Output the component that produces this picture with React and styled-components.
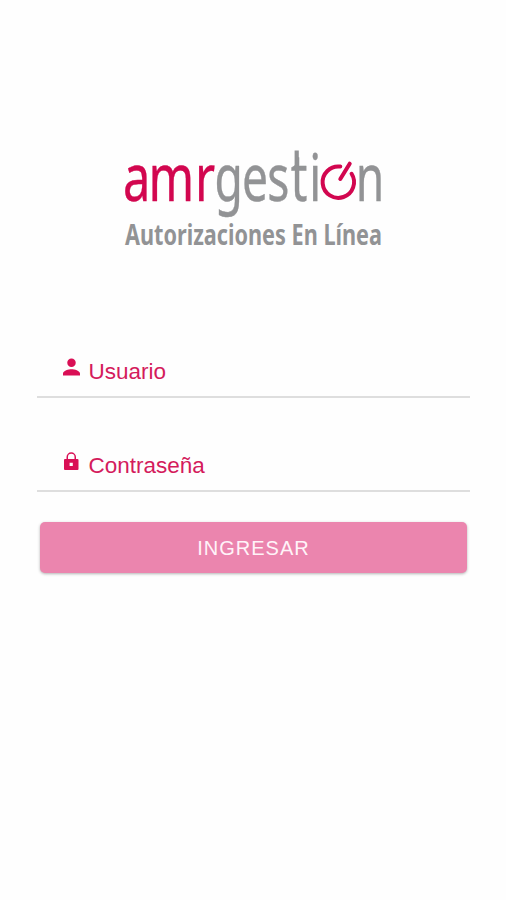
import React from 'react'
import styled, { createGlobalStyle } from 'styled-components'


const App = () =>
  <React.Fragment>
    <GlobalStyle />
    <Screen>
      <Logo />
      <Form>
        <Field>
          <UserIcon />
          <FieldLabel>Usuario</FieldLabel>
        </Field>
        <Field>
          <LockIcon />
          <FieldLabel>Contraseña</FieldLabel>
        </Field>
        <SubmitButton type="button">INGRESAR</SubmitButton>
      </Form>
    </Screen>
  </React.Fragment>

export default App

// the wordmark is set condensed, with one x position for each letter
const Brand = ({ letters, xs, accent, condensed = 0.7 }) =>
  <BrandText
    transform={`scale(${condensed} 1)`}
    x={xs.map(x => x / condensed).join(' ')}
    y="55.7"
    $accent={accent}
  >
    {letters}
  </BrandText>

const Logo = () =>
  <LogoSvg viewBox="0 0 270 104">
    <Brand letters="amr" xs={[2.9, 28.6, 75]} condensed={0.74} accent />
    <Brand letters="gesti" xs={[94.6, 122, 147.3, 170.7, 189.2]} />
    <Stem d="M176.700 5.500 V24" />
    <Power d="M220.300 21.600 A15.700 15.700 0 1 0 231.600 28.800" />
    <Power d="M220.300 34 L229.700 18.700" />
    <Brand letters="n" xs={[235.8]} />
    <Tagline x="5" y="99.5" textLength="257" lengthAdjust="spacingAndGlyphs">
      Autorizaciones En Línea
    </Tagline>
  </LogoSvg>

const UserIcon = () =>
  <Icon viewBox="4 4 16 16">
    <path d="M12 12c2.21 0 4-1.79 4-4s-1.79-4-4-4-4 1.79-4 4 1.79 4 4 4zm0 2c-2.67 0-8 1.34-8 4v2h16v-2c0-2.66-5.33-4-8-4z" />
  </Icon>

const LockIcon = () =>
  <Icon viewBox="0 0 17 18">
    <path
      fillRule="evenodd"
      d="M3.500 7V5a4.500 4.500 0 0 1 9.500 0v2h1.500q1 0 1 1v9q0 1-1 1h-12.500q-1 0-1-1V8q0-1 1-1zM5 7h6.500V5a3.250 3.250 0 0 0-6.500 0zM6.600 10.800v3.200h3.200v-3.200z"
    />
  </Icon>


const GlobalStyle = createGlobalStyle`
  body {
    margin: 0;
    background: #fefefe;
    font-family: "Liberation Sans", Arial, sans-serif;
  }
`
const Screen = styled.main`
  display: flex;
  flex-direction: column;
  box-sizing: border-box;
  height: 900px;
  padding: 145px 36px 0 37px;
`
const LogoSvg = styled.svg`
  display: block;
  flex: none;
  width: 270px;
  height: 104px;
  margin-left: 83px;
  overflow: visible;
`
const BrandText = styled.text`
  fill: ${props => props.$accent ? '#d2064f' : '#929395'};
  stroke: ${props => props.$accent ? '#d2064f' : '#929395'};
  stroke-width: 0.4;
  font-family: "Noto Sans", sans-serif;
  font-size: 66px;
`
const Stem = styled.path`
  fill: none;
  stroke: #929395;
  stroke-width: 4.2;
`
const Power = styled.path`
  fill: none;
  stroke: #d2064f;
  stroke-width: 4;
  stroke-linecap: round;
`
const Tagline = styled.text`
  fill: #929395;
  font-family: "Noto Sans", sans-serif;
  font-size: 28px;
  font-weight: 700;
`
const Form = styled.form`
  display: flex;
  flex-direction: column;
  margin-top: 95px;
`
const Field = styled.label`
  display: flex;
  align-items: flex-start;
  box-sizing: border-box;
  height: 54px;
  padding: 14px 0 0 25.5px;
  border-bottom: 2px solid #dedede;
  & + & {
    margin-top: 40px;
  }
`
const FieldLabel = styled.span`
  margin-left: 9px;
  color: #d41b5c;
  font-size: 22.5px;
  line-height: 27px;
`
const Icon = styled.svg`
  flex: none;
  width: 17px;
  height: 18px;
  fill: #d90f55;
`
const SubmitButton = styled.button`
  height: 51px;
  margin: 30px 3px 0;
  padding: 2px 0 0;
  border: 0;
  border-radius: 5px;
  background: #eb85ae;
  box-shadow: 0 1px 3px rgba(0, 0, 0, 0.3);
  color: #fff3f8;
  font-family: inherit;
  font-size: 20px;
  letter-spacing: 1px;
`
